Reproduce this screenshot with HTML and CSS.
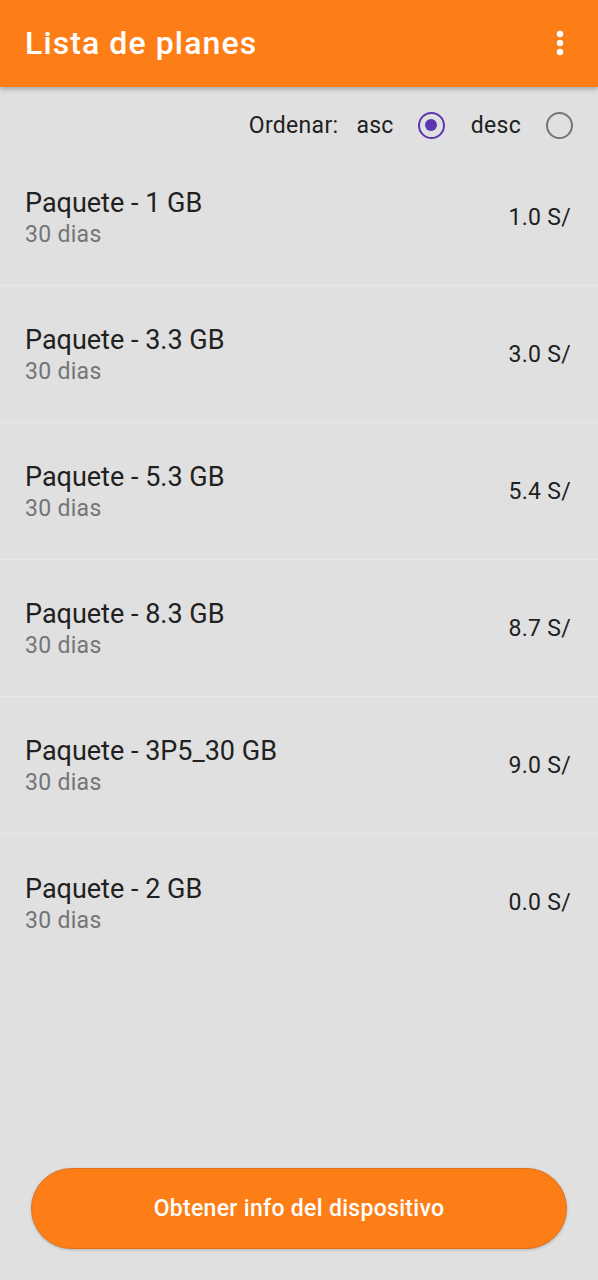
FILE: index.html
```html
<!DOCTYPE html>
<html lang="es">
<head>
<meta charset="utf-8">
<title>Lista de planes</title>
<link rel="stylesheet" href="styles.css">
</head>
<body>
<div class="screen">
  <header class="appbar">
    <h1 class="title">Lista de planes</h1>
    <svg class="kebab" width="8" height="26" viewBox="0 0 8 26"><circle cx="4" cy="4" r="3.2" fill="#fff"/><circle cx="4" cy="13" r="3.2" fill="#fff"/><circle cx="4" cy="22" r="3.2" fill="#fff"/></svg>
  </header>
  <div class="sort">
    <span class="sort-label">Ordenar:</span>
    <span class="opt">asc</span>
    <span class="radio on"><span class="dot"></span></span>
    <span class="opt opt-desc">desc</span>
    <span class="radio"></span>
  </div>
  <ul class="list">
    <li class="item"><div class="info"><div class="name">Paquete - 1 GB</div><div class="days">30 dias</div></div><div class="price">1.0 S/</div></li>
    <li class="item"><div class="info"><div class="name">Paquete - 3.3 GB</div><div class="days">30 dias</div></div><div class="price">3.0 S/</div></li>
    <li class="item"><div class="info"><div class="name">Paquete - 5.3 GB</div><div class="days">30 dias</div></div><div class="price">5.4 S/</div></li>
    <li class="item"><div class="info"><div class="name">Paquete - 8.3 GB</div><div class="days">30 dias</div></div><div class="price">8.7 S/</div></li>
    <li class="item"><div class="info"><div class="name">Paquete - 3P5_30 GB</div><div class="days">30 dias</div></div><div class="price">9.0 S/</div></li>
    <li class="item"><div class="info"><div class="name">Paquete - 2 GB</div><div class="days">30 dias</div></div><div class="price">0.0 S/</div></li>
  </ul>
  <div class="footer">
    <button class="btn">Obtener info del dispositivo</button>
  </div>
</div>
</body>
</html>
```
FILE: styles.css
```css
* { box-sizing: border-box; }
html, body { margin: 0; padding: 0; }
body {
  background: #e0e0e0;
  font-family: Roboto, "Noto Sans", "Liberation Sans", sans-serif;
  color: #212121;
}
.screen {
  width: 598px;
  height: 1280px;
  display: flex;
  flex-direction: column;
  background: #e0e0e0;
}
.appbar {
  height: 87px;
  flex: none;
  background: #fd7e17;
  display: flex;
  align-items: center;
  justify-content: space-between;
  padding: 0 34px 0 25px;
  box-shadow: 0 2px 5px rgba(0,0,0,0.28);
  position: relative;
  z-index: 1;
}
.title {
  margin: 0;
  color: #fff;
  font-size: 32px;
  font-weight: 500;
  letter-spacing: 1.1px;
  padding-bottom: 1px;
}
.kebab { display: block; margin-top: -2px; }
.sort {
  height: 62px;
  flex: none;
  display: flex;
  align-items: center;
  justify-content: flex-end;
  padding: 14px 25px 0 0;
  font-size: 23px;
  letter-spacing: 0.3px;
  color: #212121;
}
.sort-label { margin-right: 18px; }
.opt { margin-right: 24px; }
.opt-desc { margin-right: 25px; }
.radio {
  width: 27px;
  height: 27px;
  border-radius: 50%;
  border: 2.5px solid #757575;
  display: flex;
  align-items: center;
  justify-content: center;
  flex: none;
}
.radio.on { border-color: #5e35b1; margin-right: 26px; }
.radio .dot {
  width: 12px;
  height: 12px;
  border-radius: 50%;
  background: #5e35b1;
}
.list { list-style: none; margin: 0; padding: 0; flex: none; }
.item {
  height: 137px;
  display: flex;
  align-items: center;
  justify-content: space-between;
  padding: 0 27px 0 25px;
  border-bottom: 1px solid #e8e8e8;
}
.item:last-child { border-bottom: none; }
.info { display: flex; flex-direction: column; padding-top: 4px; }
.name { font-size: 27px; line-height: 32px; color: #212121; }
.days { font-size: 23px; line-height: 32px; letter-spacing: 0.3px; color: #757575; }
.price { font-size: 23px; letter-spacing: 0.3px; color: #212121; }
.footer {
  margin-top: auto;
  padding: 0 31px 31px 31px;
}
.btn {
  width: 100%;
  height: 81px;
  border-radius: 41px;
  border: 1px solid #e0701a;
  background: #fd7e17;
  color: #fff;
  font-family: Roboto, "Noto Sans", "Liberation Sans", sans-serif;
  font-size: 23px;
  font-weight: 500;
  letter-spacing: 0.3px;
  box-shadow: 0 1px 3px rgba(0,0,0,0.2);
}
```
